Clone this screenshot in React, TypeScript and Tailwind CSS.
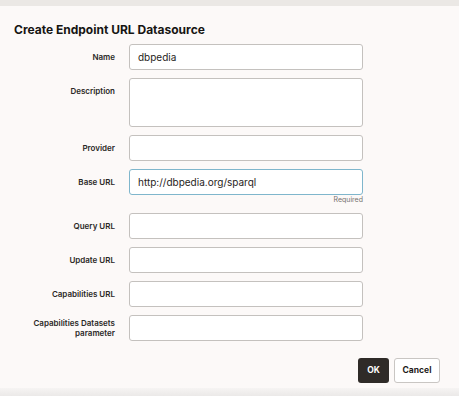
import React from 'react'

type Row = { label: string; value?: string; tall?: boolean; focus?: boolean; required?: boolean }

const rows: Row[] = [
  { label: 'Name', value: 'dbpedia' },
  { label: 'Description', tall: true },
  { label: 'Provider' },
  { label: 'Base URL', value: 'http://dbpedia.org/sparql', focus: true, required: true },
  { label: 'Query URL' },
  { label: 'Update URL' },
  { label: 'Capabilities URL' },
  { label: 'Capabilities Datasets parameter' },
]

function Field({ row }: { row: Row }) {
  return (
    <div className="flex items-start gap-[14px]">
      <div className="w-[115px] min-h-[26px] flex items-center justify-end text-right text-[8px] leading-[10px] font-semibold text-[#2a2826]">
        <span className={row.label.length > 20 ? 'w-[90px]' : ''}>{row.label}</span>
      </div>
      <div className="flex flex-col w-[234px]">
        <div
          className={
            'bg-white rounded-[3px] border flex px-[8px] text-[10px] text-[#1f1d1b] ' +
            (row.tall ? 'h-[49px] items-start pt-[6px] ' : 'h-[26px] items-center ') +
            (row.focus ? 'border-[#7fb6cc]' : 'border-[#c4c1be]')
          }
        >
          {row.value}
        </div>
        {row.required && (
          <div className="text-right text-[7px] leading-[10px] text-[#76726e]">Required</div>
        )}
      </div>
    </div>
  )
}

function App() {
  return (
    <div className="w-[459px] h-[396px] flex flex-col bg-[#fcf9f8] font-['Inter','Liberation_Sans',sans-serif] overflow-hidden">
      <div className="h-[6px] bg-[#ebe8e5]" />

      <div className="flex-1 flex flex-col">
        <h1 className="pl-[14px] pt-[15px] text-[12px] leading-[18px] font-bold text-[#161513]">
          Create Endpoint URL Datasource
        </h1>

        <div className="flex flex-col gap-[8px] mt-[5px]">
          {rows.map((r) => (
            <Field key={r.label} row={r} />
          ))}
        </div>

        <div className="flex justify-end gap-[5px] pr-[19px] mt-[17px]">
          <button className="w-[31px] h-[25px] rounded-[3px] bg-[#2f2b28] text-white text-[8.5px] font-bold">OK</button>
          <button className="w-[46px] h-[25px] rounded-[3px] bg-white border border-[#c9c6c3] text-[#1f1d1b] text-[8.5px] font-bold">
            Cancel
          </button>
        </div>
      </div>

      <div className="h-[8px] bg-gradient-to-b from-[#f6f4f3] to-[#ebe9e8]" />
    </div>
  )
}

export default App
